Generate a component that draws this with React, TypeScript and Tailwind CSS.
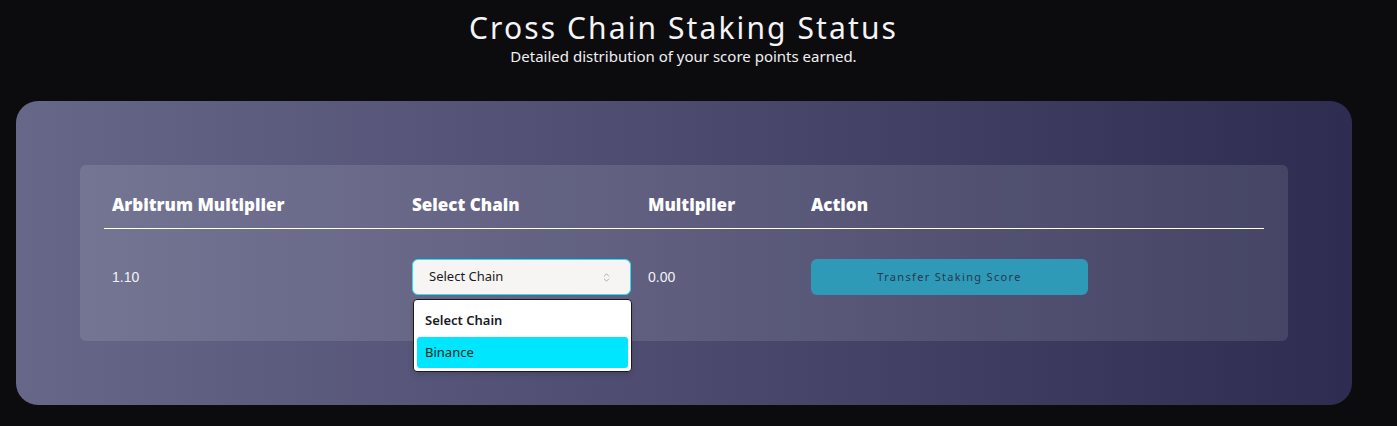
import { ChevronsUpDown } from "lucide-react";

const columns = [
  { label: "Arbitrum Multiplier", width: "w-[300px]" },
  { label: "Select Chain", width: "w-[236px]" },
  { label: "Multiplier", width: "w-[163px]" },
  { label: "Action", width: "flex-1" },
];

const headFont = { fontFamily: '"Segoe UI", "Noto Sans", "Open Sans", sans-serif' };

export default function App() {
  return (
    <div
      className="min-h-[426px] w-full bg-[#0c0c0f] text-white"
      style={{ fontFamily: '"Noto Sans", "Open Sans", sans-serif' }}
    >
      <div className="flex flex-col items-center pt-[9px] pr-[30px]">
        <h1 className="text-[30px] leading-[38px] font-normal tracking-[0.07em] text-[#f4f4f6]">
          Cross Chain Staking Status
        </h1>
        <p className="text-[15px] leading-[18px] text-[#f0f0f2]">
          Detailed distribution of your score points earned.
        </p>
      </div>

      <div className="mt-[36px] ml-[16px] mr-[45px] h-[304px] rounded-[22px] bg-gradient-to-r from-[#67678a] via-[#4c4b6f] to-[#2e2d51] px-[64px] pt-[64px]">
        <div className="rounded-[6px] bg-white/10 px-[24px] pt-[28px] h-[176px]">
          <div className="flex border-b-[1.5px] border-white pb-[11px]">
            {columns.map((col) => (
              <div
                key={col.label}
                className={`${col.width} px-[8px] text-[17px] leading-[24px] text-white`}
                style={{ fontFamily: '"Open Sans", "Noto Sans", sans-serif', fontWeight: 800 }}
              >
                {col.label}
              </div>
            ))}
          </div>

          <div className="flex items-start pt-[30px]">
            <div className="w-[300px] px-[8px] pt-[8px] text-[14px] leading-[20px] text-[#f2f2f6]" style={{ fontFamily: '"Liberation Sans", Arial, sans-serif' }}>
              1.10
            </div>
            <div className="relative w-[236px] px-[8px]">
              <div className="flex h-[36px] w-[219px] items-center justify-between rounded-[6px] border border-[#22e3f7] bg-[#f7f5f3] pl-[16px] pr-[18px] text-[13px] text-[#1b1b1f]" style={headFont}>
                <span>Select Chain</span>
                <ChevronsUpDown className="h-[11px] w-[11px] text-[#8a8a8a]" strokeWidth={1.5} />
              </div>
              <div className="absolute left-[9px] top-[40px] w-[219px] rounded-[4px] border border-[#1a1a1a] bg-white p-[3px] text-[13px] text-[#1b1b1f] shadow-md" style={headFont}>
                <div className="px-[8px] pt-[8px] pb-[6px] font-semibold">Select Chain</div>
                <div className="rounded-[3px] bg-[#00e6ff] px-[8px] py-[6px] text-[#0e2a12]">Binance</div>
              </div>
            </div>
            <div className="w-[163px] px-[8px] pt-[8px] text-[14px] leading-[20px] text-[#f2f2f6]" style={{ fontFamily: '"Liberation Sans", Arial, sans-serif' }}>
              0.00
            </div>
            <div className="flex-1 px-[8px]">
              <button
                type="button"
                className="h-[36px] w-[277px] rounded-[6px] bg-[#2e9ab8] text-[11px] tracking-[0.12em] text-[#2b3650]"
                style={headFont}
              >
                Transfer Staking Score
              </button>
            </div>
          </div>
        </div>
      </div>
    </div>
  );
}
